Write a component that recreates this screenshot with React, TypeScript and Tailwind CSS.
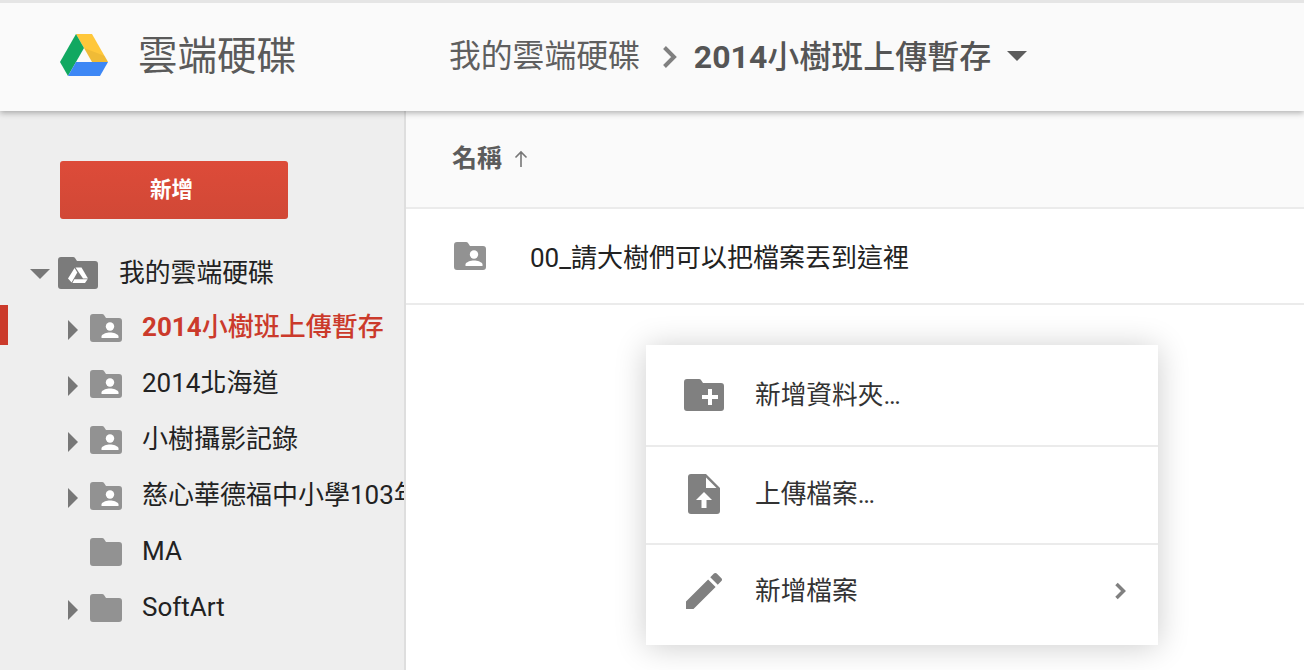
import React from "react";

const font = "font-['Roboto','Noto_Sans_CJK_TC',sans-serif]";

const DriveLogo = () => (
  <svg viewBox="0 0 48 42" className="h-[42px] w-[48px]">
    <path d="M16 0 L32 0 L48 28 L32 28 Z" fill="#FFC73A" />
    <path d="M16 0 L24 14 L8 42 L0 28 Z" fill="#11A861" />
    <path d="M16 28 L48 28 L40 42 L8 42 Z" fill="#3D87F5" />
    <path d="M24 14 L32 28 L48 28 L45 22 Z" fill="#000" opacity="0.06" />
  </svg>
);

const folderPath =
  "M3 0 H12 Q13.5 0 14 1 L16 4 H29 a3 3 0 0 1 3 3 V25 a3 3 0 0 1 -3 3 H3 a3 3 0 0 1 -3 -3 V3 a3 3 0 0 1 3 -3 Z";

const SharedFolder = () => (
  <svg viewBox="0 0 32 28" className="h-[28px] w-[32px]">
    <path d={folderPath} fill="#929292" />
    <circle cx="20" cy="12.5" r="4.2" fill="#fff" />
    <path d="M11.5 24 V22.5 C11.5 20 17 18.5 20 18.5 C23 18.5 28.5 20 28.5 22.5 V24 Z" fill="#fff" />
  </svg>
);

const PlainFolder = () => (
  <svg viewBox="0 0 32 28" className="h-[28px] w-[32px]">
    <path d={folderPath} fill="#929292" />
  </svg>
);

const DriveFolder = () => (
  <svg viewBox="0 0 40 32" className="h-[32px] w-[40px]">
    <path
      d="M3 0 H15 Q16.5 0 17 1 L19 4 H37 a3 3 0 0 1 3 3 V29 a3 3 0 0 1 -3 3 H3 a3 3 0 0 1 -3 -3 V3 a3 3 0 0 1 3 -3 Z"
      fill="#7b7b7b"
    />
    <path d="M17.5 10.5 H23.5 L30 21.5 H25 Z" fill="#fff" />
    <path d="M16.6 11 L19.3 15.6 L13.6 25.5 L10 21.5 Z" fill="#fff" />
    <path d="M16.4 22.3 H29.6 L27 26 H14.4 Z" fill="#fff" />
  </svg>
);

const Arrow = ({ open }: { open?: boolean }) =>
  open ? (
    <div className="h-0 w-0 border-x-[10px] border-t-[10px] border-x-transparent border-t-[#777]" />
  ) : (
    <div className="h-0 w-0 border-y-[10px] border-l-[10px] border-y-transparent border-l-[#777]" />
  );

const BoldLabel = ({ digits, rest }: { digits: string; rest: string }) => (
  <>
    <span className="font-bold">{digits}</span>
    <span className="font-medium">{rest}</span>
  </>
);

const TreeRow = ({
  label,
  active,
  arrow = true,
  shared = true,
}: {
  label: React.ReactNode;
  active?: boolean;
  arrow?: boolean;
  shared?: boolean;
}) => (
  <div className="relative flex h-[56px] items-center pl-[68px]">
    {active && <div className="absolute left-0 top-[5px] h-[40px] w-[8px] bg-[#cb3a2b]" />}
    <div className="flex w-[22px] shrink-0 items-center pt-[4px]">{arrow && <Arrow />}</div>
    <div className="w-[52px] shrink-0">{shared ? <SharedFolder /> : <PlainFolder />}</div>
    <span className={`whitespace-nowrap pb-[2px] text-[26px] ${active ? "text-[#cb3a2b]" : "text-[#222]"}`}>
      {label}
    </span>
  </div>
);

const MenuRow = ({
  icon,
  label,
  sub,
  className,
}: {
  icon: React.ReactNode;
  label: string;
  sub?: boolean;
  className: string;
}) => (
  <div className={`flex items-center pl-[38px] pr-[30px] ${className}`}>
    <div className="flex w-[71px] shrink-0 items-center">{icon}</div>
    <span className="flex-1 text-[25.7px] text-[#333]">{label}</span>
    {sub && (
      <svg viewBox="0 0 14 18" className="h-[18px] w-[14px]">
        <path d="M2.5 2 L9.5 9 L2.5 16" fill="none" stroke="#808080" strokeWidth="3.5" />
      </svg>
    )}
  </div>
);

export default function App() {
  return (
    <div className={`relative flex h-[670px] w-[1304px] flex-col overflow-hidden bg-white ${font}`}>
      <header className="relative z-10 flex h-[111px] shrink-0 items-center border-t-[3px] border-[#e5e5e5] bg-[#fafafa] pb-[2px] shadow-[0_2px_6px_rgba(0,0,0,0.3)]">
        <div className="ml-[60px] w-[78px] pb-[3px]">
          <DriveLogo />
        </div>
        <h1 className="w-[311px] pt-[1px] text-[39.5px] font-normal text-[#5a5a5a]">雲端硬碟</h1>
        <span className="pt-[1px] text-[31.8px] text-[#5f5f5f]">我的雲端硬碟</span>
        <svg viewBox="0 0 15 24" className="ml-[22px] mr-[17px] mt-[2px] h-[24px] w-[15px]">
          <path d="M2.5 2.5 L12 12 L2.5 21.5" fill="none" stroke="#808080" strokeWidth="4" />
        </svg>
        <span className="pt-[1px] text-[32px] text-[#555]">
          <BoldLabel digits="2014" rest="小樹班上傳暫存" />
        </span>
        <div className="ml-[16px] h-0 w-0 border-x-[10px] border-t-[10px] border-x-transparent border-t-[#5c5c5c]" />
      </header>

      <div className="flex min-h-0 flex-1">
        <aside className="w-[406px] shrink-0 overflow-hidden border-r-2 border-[#dedede] bg-[#eeeeee]">
          <div className="ml-[60px] mt-[50px] flex h-[58px] w-[228px] items-center justify-center rounded-[3px] bg-gradient-to-b from-[#dd4b39] to-[#d14836] pr-[5px] text-[21.5px] font-bold text-white">
            新增
          </div>
          <div className="mt-[27px] flex h-[54px] items-center pl-[30px]">
            <div className="w-[28px] shrink-0 pt-[2px]">
              <Arrow open />
            </div>
            <div className="w-[61px] shrink-0">
              <DriveFolder />
            </div>
            <span className="text-[25.8px] text-[#222]">我的雲端硬碟</span>
          </div>
          <TreeRow label={<BoldLabel digits="2014" rest="小樹班上傳暫存" />} active />
          <TreeRow label="2014北海道" />
          <TreeRow label="小樹攝影記錄" />
          <TreeRow label="慈心華德福中小學103年" />
          <TreeRow label="MA" arrow={false} shared={false} />
          <TreeRow label="SoftArt" shared={false} />
        </aside>

        <main className="min-w-0 flex-1">
          <div className="flex h-[98px] items-center border-b-2 border-[#ebebeb] bg-[#fafafa] pl-[46px]">
            <span className="text-[25px] font-bold text-[#5c5c5c]">名稱</span>
            <svg viewBox="0 0 16 18" className="ml-[11px] h-[18px] w-[16px]">
              <path d="M8 17 V2 M2.5 7.5 L8 2 L13.5 7.5" fill="none" stroke="#777" strokeWidth="1.6" />
            </svg>
          </div>
          <div className="flex h-[96px] items-center border-b-2 border-[#ebebeb] pl-[48px]">
            <div className="w-[76px]">
              <SharedFolder />
            </div>
            <span className="pt-[4px] text-[26px] text-[#222]">00_請大樹們可以把檔案丟到這裡</span>
          </div>
        </main>
      </div>

      <div className="absolute left-[646px] top-[345px] z-20 w-[512px] bg-white shadow-[0_2px_30px_rgba(0,0,0,0.2)]">
        <MenuRow
          className="h-[102px] border-b-2 border-[#ebebeb]"
          label="新增資料夾…"
          icon={
            <svg viewBox="0 0 40 32" className="h-[32px] w-[40px]">
              <path
                d="M3 0 H15 Q16.5 0 17 1 L19 4 H37 a3 3 0 0 1 3 3 V29 a3 3 0 0 1 -3 3 H3 a3 3 0 0 1 -3 -3 V3 a3 3 0 0 1 3 -3 Z"
                fill="#808080"
              />
              <path d="M24 10 h4 v6 h6 v4 h-6 v6 h-4 v-6 h-6 v-4 h6 Z" fill="#fff" />
            </svg>
          }
        />
        <MenuRow
          className="h-[98px] border-b-2 border-[#ebebeb] pb-[2px]"
          label="上傳檔案…"
          icon={
            <svg viewBox="0 0 32 40" className="ml-[4px] h-[40px] w-[32px]">
              <path d="M3 0 H18 L32 14 V37 a3 3 0 0 1 -3 3 H3 a3 3 0 0 1 -3 -3 V3 a3 3 0 0 1 3 -3 Z" fill="#808080" />
              <path d="M18 3.5 L28.5 14 H18 Z" fill="#fff" />
              <path d="M16 18 L24 26 H18.5 V34 H13.5 V26 H8 Z" fill="#fff" />
            </svg>
          }
        />
        <MenuRow
          className="h-[100px] pb-[8px]"
          sub
          label="新增檔案"
          icon={
            <svg viewBox="3 3 18 18" className="ml-[2px] h-[36px] w-[36px]">
              <path
                d="M3 17.25V21h3.75L17.81 9.94l-3.75-3.75L3 17.25zM20.71 7.04c.39-.39.39-1.02 0-1.41l-2.34-2.34c-.39-.39-1.02-.39-1.41 0l-1.83 1.83 3.75 3.75 1.83-1.83z"
                fill="#808080"
              />
            </svg>
          }
        />
      </div>
    </div>
  );
}
